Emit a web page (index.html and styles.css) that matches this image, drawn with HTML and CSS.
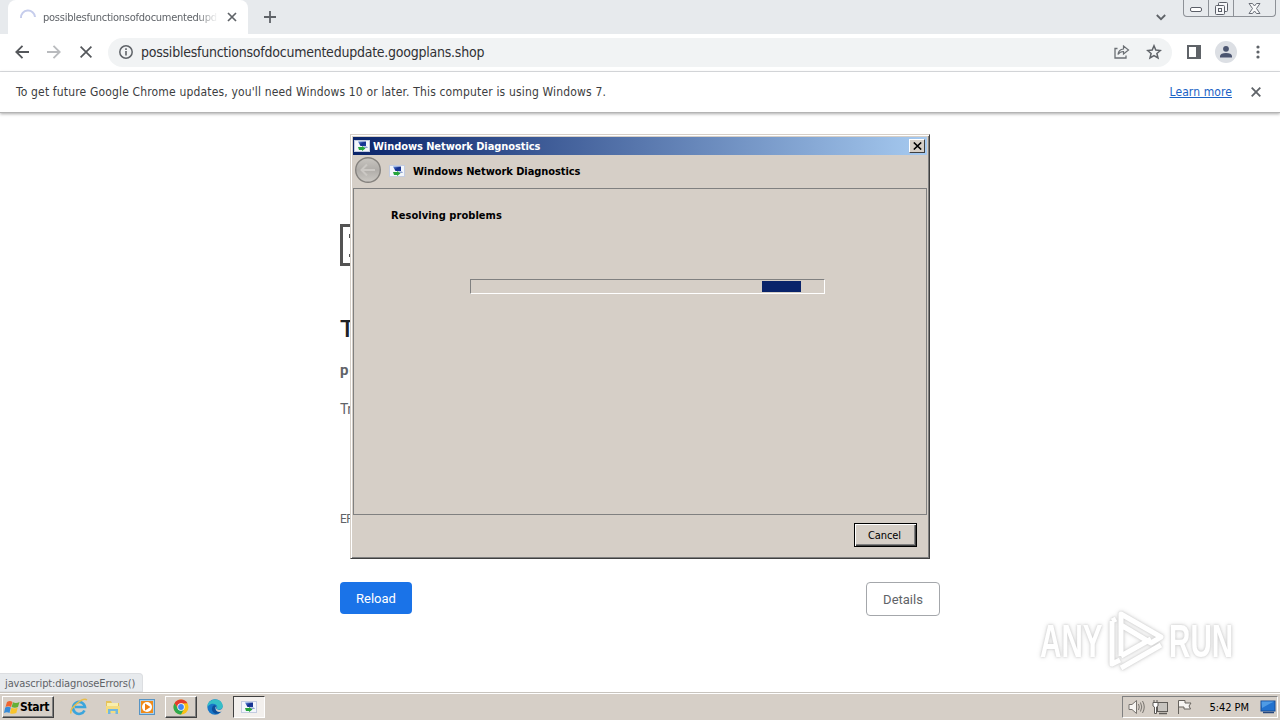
FILE: index.html
```html
<!DOCTYPE html>
<html lang="en">
<head>
  <meta charset="UTF-8">
  <meta name="viewport" content="width=device-width, initial-scale=1.0">
  <title>possiblesfunctionsofdocumentedupdate.googplans.shop</title>
  <link rel="stylesheet" href="styles.css">
</head>
<body>
  <!-- Shared network diagnostics icon -->
  <svg class="defs" width="0" height="0">
    <defs>
      <linearGradient id="screen" x1="0" y1="0" x2="1" y2="1">
        <stop offset="0" stop-color="#6d9ae6" />
        <stop offset="0.5" stop-color="#16318f" />
        <stop offset="1" stop-color="#1d3f9e" />
      </linearGradient>
      <symbol id="diag" viewBox="0 0 16 14">
        <rect x="0.5" y="1.5" width="15" height="11" fill="#f3f6fc" stroke="#c3cce0" />
        <path d="M4 2.500H12V7H6.500Z" fill="url(#screen)" />
        <path d="M9 7.500H13L14 9H10Z" fill="#8fa3d0" />
        <path d="M4 8H8V7L11.500 9.500 8 12V11H5Z" fill="#25a43b" />
      </symbol>
    </defs>
  </svg>

  <div class="tab-strip">
    <div class="tab">
      <svg class="spinner" width="18" height="18" viewBox="0 0 18 18"><path d="M2 10A7 7 0 0 1 16 9" fill="none" stroke="#c6cdec" stroke-width="2" /></svg>
      <span class="tab-title">possiblesfunctionsofdocumentedupd</span>
      <svg width="10" height="10" viewBox="0 0 10 10"><path d="M1 1 9 9M9 1 1 9" stroke="#5f6368" stroke-width="1.700" /></svg>
    </div>
    <svg class="new-tab" width="12" height="12" viewBox="0 0 12 12"><path d="M6 0V12M0 6H12" stroke="#5f6368" stroke-width="1.800" /></svg>
    <svg class="tab-search" width="10" height="7" viewBox="0 0 10 7"><path d="M.8 1 5 5.200 9.200 1" fill="none" stroke="#5f6368" stroke-width="1.800" /></svg>
    <div class="window-buttons">
      <span class="window-button"><svg width="13" height="6" viewBox="0 0 13 6"><rect x="0.500" y="0.500" width="11" height="4" rx="1.500" fill="#fff" stroke="#5b5f68" /></svg></span>
      <span class="window-button"><svg width="13" height="13" viewBox="0 0 13 13"><g fill="#f6f7f9" stroke="#5b5f68"><rect x="3.500" y="0.500" width="9" height="9" rx="1" /><rect x="0.500" y="3.500" width="9" height="9" rx="1" /><rect x="3.500" y="6.500" width="3" height="3" /></g></svg></span>
      <span class="window-button close"><svg width="13" height="11" viewBox="0 0 13 11"><path d="M1 .5H4.500L6.500 3 8.500 .5H12L8.500 5.500 12 10.500H8.500L6.500 8 4.500 10.500H1L4.500 5.500Z" fill="#f8f9fa" stroke="#6b6f78" /></svg></span>
    </div>
  </div>

  <div class="toolbar">
    <svg width="14" height="14" viewBox="0 0 14 14"><path d="M14 7H1.500M7.500 .8 1.300 7 7.500 13.200" fill="none" stroke="#54575b" stroke-width="1.800" /></svg>
    <svg width="14" height="14" viewBox="0 0 14 14"><path d="M0 7H12.500M6.500 .8 12.700 7 6.500 13.200" fill="none" stroke="#b9bbbe" stroke-width="1.800" /></svg>
    <svg class="stop" width="12" height="12" viewBox="0 0 12 12"><path d="M.6.6 11.400 11.400M11.400.6.6 11.400" stroke="#54575b" stroke-width="1.700" /></svg>
    <div class="omnibox">
      <svg width="14" height="14" viewBox="0 0 14 14"><circle cx="7" cy="7" r="6.200" fill="none" stroke="#5f6368" stroke-width="1.500" /><path d="M7 6V10.500M7 3.300V4.900" stroke="#5f6368" stroke-width="1.600" /></svg>
      <span class="url">possiblesfunctionsofdocumentedupdate.googplans.shop</span>
      <svg class="share" width="16" height="14" viewBox="0 0 16 14"><path d="M3.500 3.500H1V13H12V10.500" fill="none" stroke="#6b6f74" stroke-width="1.300" /><path d="M4 9.500Q4.500 4.500 9.500 4V1L14.500 5 9.500 9V6.500Q6 6.500 4 9.500Z" fill="none" stroke="#6b6f74" stroke-width="1.200" /></svg>
      <svg class="star" width="16" height="16" viewBox="0 0 16 16"><path d="M8 1.800 9.800 6.100 14.400 6.500 10.900 9.500 12 14 8 11.600 4 14 5.100 9.500 1.600 6.500 6.200 6.100Z" fill="none" stroke="#5f6368" stroke-width="1.500" /></svg>
    </div>
    <svg class="side-panel" width="14" height="14" viewBox="0 0 14 14"><path d="M1 1H13V13H1Z" fill="none" stroke="#5f6368" stroke-width="2" /><path d="M9 1H13V13H9Z" fill="#5f6368" /></svg>
    <svg class="profile" width="22" height="22" viewBox="0 0 22 22"><circle cx="11" cy="11" r="11" fill="#dcdfe4" /><circle cx="11" cy="7.800" r="2.900" fill="#4b5570" /><path d="M5 16.500V15Q5.500 12 11 12T17 15V16.500Z" fill="#4b5570" /></svg>
    <svg class="menu" width="4" height="14" viewBox="0 0 4 14"><g fill="#5f6368"><circle cx="2" cy="2" r="1.600" /><circle cx="2" cy="7" r="1.600" /><circle cx="2" cy="12" r="1.600" /></g></svg>
  </div>

  <div class="infobar">
    <span class="infobar-text">To get future Google Chrome updates, you'll need Windows 10 or later. This computer is using Windows 7.</span>
    <a class="learn-more" href="#">Learn more</a>
    <svg width="10" height="10" viewBox="0 0 10 10"><path d="M.7.7 9.300 9.300M9.300.7.7 9.300" stroke="#5f6368" stroke-width="1.800" /></svg>
  </div>

  <main class="page">
    <div class="error">
      <svg class="error-icon" width="40" height="42" viewBox="0 0 40 42"><path d="M1.500 1.500H28L38.500 12V40.500H1.500Z" fill="none" stroke="#535353" stroke-width="3" /><path d="M9 10H12V14H9ZM9 30H12V33H9Z" fill="#535353" /></svg>
      <h1>This site</h1>
      <p class="host">possibles</p>
      <p class="suggestion">Try:</p>
      <p class="code">ERR</p>
      <div class="buttons">
        <button class="reload">Reload</button>
        <button class="details">Details</button>
      </div>
    </div>
    <div class="status">javascript:diagnoseErrors()</div>
    <div class="watermark">
      <span>ANY</span>
      <svg width="58" height="64" viewBox="0 0 58 64"><g fill="none" stroke="#fff" stroke-width="5" stroke-linejoin="round"><path d="M14 47V5L54 28 44 34 14 16" /><path d="M5 12V55L13 51M5 12 9 10M14 59 54 36M14 47 44 30" /></g></svg>
      <span>RUN</span>
    </div>
  </main>

  <!-- Diagnostics window -->
  <div class="dialog">
    <div class="titlebar">
      <svg width="16" height="14"><use href="#diag" /></svg>
      <span class="titlebar-text">Windows Network Diagnostics</span>
      <span class="titlebar-close"><svg width="9" height="8" viewBox="0 0 9 8"><path d="M.8.5 8.200 7.500M8.200.5.8 7.500" stroke="#000" stroke-width="1.600" /></svg></span>
    </div>
    <div class="dialog-header">
      <svg class="back-orb" width="28" height="28" viewBox="0 0 28 28">
        <defs><linearGradient id="orb" x2="0" y2="1"><stop offset="0" stop-color="#c9c6c1" /><stop offset=".5" stop-color="#b0ada9" /><stop offset="1" stop-color="#ccc9c4" /></linearGradient></defs>
        <circle cx="14" cy="14" r="12.300" fill="url(#orb)" stroke="#85827e" stroke-width="1.400" />
        <path d="M21 14H8M13 8.500 7.500 14 13 19.500" fill="none" stroke="#cbc8c4" stroke-width="2" />
      </svg>
      <svg class="header-icon" width="16" height="14"><use href="#diag" /></svg>
      <span class="header-text">Windows Network Diagnostics</span>
    </div>
    <div class="dialog-body">
      <div class="resolving">Resolving problems</div>
      <div class="progress"><div class="progress-block"></div></div>
    </div>
    <div class="dialog-footer"><button class="cancel">Cancel</button></div>
  </div>

  <div class="taskbar">
    <div class="start">
      <svg width="16" height="15" viewBox="0 0 16 15"><path d="M3 2Q6 0 8.500 2L7 7Q4.500 5.500 1.500 7Z" fill="#ef6530" /><path d="M9 2.300Q12 4 15.500 2L14 7Q11 8.500 7.600 7Z" fill="#65b035" /><path d="M1.200 7.600Q4 6.100 6.800 7.600L5.500 13Q3 11.500 0 13Z" fill="#378bd8" /><path d="M7.400 7.800Q10.500 9.300 13.700 7.700L12.300 13Q9 14.500 6 13.300Z" fill="#f8c42c" /></svg>
      <span class="start-text">Start</span>
    </div>
    <div class="task"><svg width="18" height="18" viewBox="0 0 18 18"><path d="M14.500 12.500A6 6 0 1 1 15 9H5" fill="none" stroke="#3ba5dc" stroke-width="2.600" /><path d="M1 15.500C-1 10 13-1 17 2" fill="none" stroke="#e8bd4b" stroke-width="1.500" /></svg></div>
    <div class="task"><svg width="16" height="16" viewBox="0 0 16 16"><path d="M1 2H6L7 4H14V14H1Z" fill="#e6c35a" /><path d="M2 4H13V8H2Z" fill="#f9efac" /><path d="M1 7H15V14H1Z" fill="#f4dc80" /><path d="M3 15V10H13V15H10.500V12H5.500V15Z" fill="#72b8df" /></svg></div>
    <div class="task"><svg width="16" height="16" viewBox="0 0 16 16"><rect x=".5" y=".5" width="15" height="15" fill="#a8cfed" stroke="#5794c4" /><rect x="2" y="2" width="12" height="12" fill="#ef8b1a" /><circle cx="8" cy="8" r="5" fill="#fff" /><path d="M6 4.500 11.500 8 6 11.500Z" fill="#ef7f12" /></svg></div>
    <div class="task raised"><svg width="16" height="16" viewBox="0 0 16 16"><circle cx="8" cy="8" r="7.500" fill="#fbc116" /><path d="M1.500 4.250A7.500 7.500 0 0 1 14.500 4.250L8 4.500 5 9.500Z" fill="#e33b2e" /><path d="M1.500 4.250A7.500 7.500 0 0 0 8 15.500L11 10 5 9.500Z" fill="#2da94f" /><circle cx="8" cy="8" r="3.700" fill="#fff" /><circle cx="8" cy="8" r="2.900" fill="#4285f4" /></svg></div>
    <div class="task"><svg width="16" height="16" viewBox="0 0 16 16"><circle cx="8" cy="8" r="7.700" fill="#1777c8" /><path d="M.5 7C1-1 15-2 15.700 7 16 11 11 11 9.500 10 12 7 8 3.500 4 5Q1.500 6 .5 8Z" fill="#35bfc7" /><path d="M9 7Q7 11 10.500 12.500 13 13 15 11.500 12 15.500 8 14.500 3.500 12 5.500 7.500 7.500 5.500 9 7Z" fill="#0d4f9b" /><path d="M9.500 7.500Q8 10.500 12 11 15 11 15.700 8L16 12 13 13Q8 13 8.500 8Z" fill="#d6cfc7" /></svg></div>
    <div class="task pressed"><svg width="16" height="14"><use href="#diag" /></svg></div>
    <div class="tray">
      <svg width="17" height="16" viewBox="0 0 17 16"><path d="M1 5.500H4L8.500 1.500V14.500L4 10.500H1Z" fill="#f7f5f2" stroke="#77736e" /><path d="M10.500 5Q12 8 10.500 11M12.500 3.500Q15 8 12.500 12.500M14.500 2Q18 8 14.500 14" fill="none" stroke="#77736e" /></svg>
      <svg width="17" height="16" viewBox="0 0 17 16"><rect x="5.500" y="3.500" width="10" height="9" fill="#c7c4bf" stroke="#5f5c58" /><path d="M7 14.500H15" stroke="#5f5c58" stroke-width="1.500" /><path d="M1 3.500H6V7L4.500 8V14.500H2.500V8L1 7ZM2 1V3.500M5 1V3.500" fill="#fff" stroke="#5f5c58" /></svg>
      <svg width="17" height="16" viewBox="0 0 17 16"><path d="M2.500 15V1.500H9V4H15L13 7 14.500 10H8V8H2.500" fill="#f7f5f2" stroke="#66625d" /></svg>
      <span class="clock">5:42 PM</span>
      <svg width="16" height="14" viewBox="0 0 16 14"><rect x="1" y="1" width="14" height="10" fill="#2272cf" stroke="#174d96" /><path d="M1.500 1.500H14L2 8Z" fill="#4f9be5" /><path d="M3 12.500H14" stroke="#26477d" stroke-width="1.500" /></svg>
    </div>
  </div>
</body>
</html>
```
FILE: styles.css
```css
:root {
  --face: #d6cfc7;
  --shadow: #808080;
  --dark: #404040;
  --navy: #0a246a;
}

* {
  box-sizing: border-box;
}

body {
  margin: 0;
  width: 1280px;
  height: 720px;
  display: flex;
  flex-direction: column;
  overflow: hidden;
  position: relative;
  background: #fff;
  font-family: "DejaVu Sans Condensed", "DejaVu Sans", sans-serif;
  font-size: 11px;
  white-space: nowrap;
}

svg {
  display: block;
  flex: none;
}

.defs {
  position: absolute;
}

button {
  font-family: inherit;
  padding: 0;
}

/* Browser */
.tab-strip {
  height: 34px;
  flex: none;
  display: flex;
  align-items: flex-start;
  padding-left: 8px;
  background: #e7eaed;
}

.tab {
  width: 240px;
  height: 34px;
  display: flex;
  align-items: center;
  padding: 0 11px;
  border-radius: 8px 8px 0 0;
  background: #fff;
}

.tab-title {
  width: 175px;
  margin: 0 9px 0 6px;
  letter-spacing: -0.25px;
  color: #5f6368;
  -webkit-mask-image: linear-gradient(90deg, #000 88%, transparent);
}

.new-tab {
  margin: 11px 0 0 16px;
}

.tab-search {
  margin: 14px 17px 0 auto;
}

.window-buttons {
  display: flex;
  width: 93px;
  height: 17px;
  margin-right: 4px;
  border: 1px solid #8d9197;
  border-top: none;
  border-radius: 0 0 4px 4px;
}

.window-button {
  width: 25px;
  display: flex;
  align-items: center;
  justify-content: center;
  border-right: 1px solid #8d9197;
}

.window-button:first-child {
  padding-top: 4px;
}

.window-button.close {
  flex: 1;
  border: none;
}

.toolbar {
  height: 38px;
  flex: none;
  display: flex;
  align-items: center;
  padding: 0 19px 1px 15px;
  border-bottom: 1px solid #dadce0;
}

.toolbar > svg + svg {
  margin-left: 18px;
}

.toolbar > .stop {
  margin: 0 16px 0 19px;
}

.omnibox {
  width: 1064px;
  height: 29px;
  display: flex;
  align-items: center;
  padding: 0 10px 0 11px;
  border-radius: 15px;
  background: #f1f3f4;
}

.url {
  margin-left: 8px;
  font-size: 14px;
  letter-spacing: -0.24px;
  color: #303134;
}

.share {
  margin-left: auto;
}

.star {
  margin-left: 16px;
}

.toolbar > .side-panel {
  margin-left: 15px;
}

.toolbar > .profile {
  margin-left: 14px;
}

.toolbar > .menu {
  margin-left: 19px;
}

.infobar {
  height: 41px;
  flex: none;
  display: flex;
  align-items: center;
  padding: 0 19px 0 16px;
  border-bottom: 1px solid #b4b4b4;
  box-shadow: 0 1px 3px #aaa;
  font-size: 12px;
  color: #3c3d40;
}

.infobar-text {
  letter-spacing: 0.16px;
}

.learn-more {
  margin: 0 19px 0 auto;
  letter-spacing: 0.1px;
  color: #1a62c5;
}

.page {
  flex: 1;
  position: relative;
}

.error {
  width: 600px;
  margin: 0 auto;
  padding-top: 111px;
  font-family: Roboto, sans-serif;
  color: #5f6368;
}

h1 {
  margin: 48px 0 0;
  font-size: 24px;
  line-height: 30px;
  font-weight: 500;
  color: #202124;
}

.error p {
  margin: 0;
  font-size: 15px;
  line-height: 20px;
}

.error .host {
  margin-top: 16px;
  font-weight: 700;
  letter-spacing: 1px;
}

.error .suggestion {
  margin-top: 19px;
  font-size: 14px;
  letter-spacing: -0.5px;
}

.error .code {
  margin-top: 90px;
  font-size: 12px;
  letter-spacing: -0.5px;
}

.buttons {
  display: flex;
  justify-content: space-between;
  margin-top: 53px;
}

.buttons button {
  font-size: 13px;
  border-radius: 4px;
}

.reload {
  width: 72px;
  height: 32px;
  border: none;
  background: #1a73e8;
  color: #fff;
}

.details {
  width: 74px;
  height: 34px;
  border: 1px solid #a4a7ab;
  background: #fff;
  color: #5f6368;
}

/* Link target bubble over the page */
.status {
  position: absolute;
  left: 0;
  bottom: 0;
  width: 143px;
  height: 19px;
  padding-left: 5px;
  line-height: 19px;
  border: 1px solid #dcdee1;
  border-left: none;
  border-radius: 0 4px 0 0;
  background: #e7eaed;
  letter-spacing: -0.12px;
  color: #5f6368;
}

.watermark {
  position: absolute;
  right: 48px;
  bottom: 19px;
  display: flex;
  align-items: center;
  gap: 4px;
  font: 700 47px/64px "Liberation Sans", sans-serif;
  color: #fff;
  filter: drop-shadow(0 0 1px #ccc) drop-shadow(0 0 2px #ddd);
}

.watermark span {
  width: 63px;
  transform: scaleX(0.63);
  transform-origin: left;
}

/* Dialog */
.dialog {
  position: absolute;
  left: 350px;
  top: 134px;
  width: 580px;
  height: 425px;
  display: flex;
  flex-direction: column;
  padding: 1px;
  border: 1px solid;
  border-color: var(--face) var(--dark) var(--dark) var(--face);
  box-shadow: inset 1px 1px #fff, inset -1px -1px var(--shadow);
  background: var(--face);
  color: #000;
}

.titlebar {
  height: 18px;
  margin: 1px 1px 0;
  display: flex;
  align-items: center;
  padding: 0 2px 0 1px;
  background: linear-gradient(90deg, var(--navy), #a6caf0);
}

.titlebar-text {
  margin-left: 3px;
  font-weight: 700;
  letter-spacing: -0.07px;
  color: #fff;
}

.titlebar-close {
  width: 16px;
  height: 14px;
  margin-left: auto;
  display: flex;
  align-items: center;
  justify-content: center;
  background: var(--face);
  border: 1px solid;
  border-color: #fff var(--dark) var(--dark) #fff;
}

.dialog-header {
  height: 33px;
  display: flex;
  align-items: center;
  padding: 0 0 3px 2px;
}

.header-icon {
  margin: 2px 7px 0 7px;
}

.header-text {
  margin: 3px 0 0 1px;
  font-weight: 700;
  letter-spacing: -0.07px;
}

.dialog-body {
  height: 327px;
  margin: 0 1px;
  padding: 20px 37px 0;
  border: 1px solid var(--shadow);
}

.resolving {
  line-height: 14px;
  font-weight: 700;
  letter-spacing: 0.05px;
}

.progress {
  width: 355px;
  height: 15px;
  margin: 56px 0 0 79px;
  padding: 1px 23px 1px 0;
  display: flex;
  justify-content: flex-end;
  border: 1px solid;
  border-color: var(--shadow) #fff #fff var(--shadow);
}

.progress-block {
  width: 39px;
  background: var(--navy);
}

.dialog-footer {
  display: flex;
  justify-content: flex-end;
  padding: 8px 11px 0;
}

.cancel {
  width: 63px;
  height: 24px;
  padding-right: 2px;
  border: 1px solid #000;
  box-shadow: inset 1px 1px #fff, inset -1px -1px var(--dark), inset -2px -2px var(--shadow);
  background: var(--face);
  color: #000;
  font-size: 11px;
  letter-spacing: -0.1px;
}

/* Taskbar */
.taskbar {
  height: 28px;
  flex: none;
  display: flex;
  align-items: center;
  gap: 2px;
  padding: 1px 2px 0;
  border-top: 1px solid #c8c4be;
  box-shadow: inset 0 1px #fff;
  background: var(--face);
}

.start {
  width: 52px;
  height: 22px;
  margin-right: 7px;
  display: flex;
  align-items: center;
  gap: 0;
  padding-left: 1px;
  border: 1px solid;
  border-color: #fff var(--dark) var(--dark) #fff;
  box-shadow: inset -1px -1px var(--shadow);
}

.start-text {
  font-size: 12px;
  font-weight: 700;
  letter-spacing: -0.3px;
}

.task {
  width: 32px;
  height: 22px;
  display: flex;
  align-items: center;
  justify-content: center;
}

.task.raised {
  border: 1px solid;
  border-color: #fff var(--dark) var(--dark) #fff;
  box-shadow: inset -1px -1px var(--shadow);
}

.task.pressed {
  border: 1px solid;
  border-color: var(--dark) #fff #fff var(--dark);
  background: #f3f0ed;
}

.tray {
  width: 156px;
  height: 22px;
  margin-left: auto;
  display: flex;
  align-items: center;
  gap: 7px;
  padding: 0 1px 0 5px;
  border: 1px solid;
  border-color: var(--shadow) #fff #fff var(--shadow);
}

.clock {
  margin: 0 4px 0 auto;
  letter-spacing: -0.05px;
}
```
